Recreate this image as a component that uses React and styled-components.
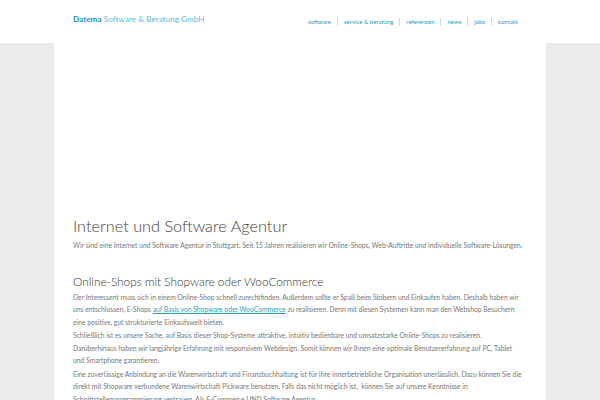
import React from "react";
import styled, { createGlobalStyle } from "styled-components";

const GlobalStyle = createGlobalStyle`
  html, body {
    margin: 0;
    padding: 0;
    background: #ebebeb;
    font-family: Lato, "Open Sans", sans-serif;
  }
`;

const Header = styled.header`
  height: 43px;
  background: #fff;
  display: flex;
  justify-content: space-between;
  align-items: flex-start;
  padding: 0 76px 0 73px;
`;

const Brand = styled.div`
  margin-top: 14px;
  font-size: 8px;
  color: #5bb8de;
  letter-spacing: 0.1px;

  b {
    color: #1b8ccc;
    font-weight: 700;
  }
`;

const Nav = styled.nav`
  display: flex;
  margin-top: 18px;
`;

const NavLink = styled.span`
  font-size: 6px;
  color: #2a9ec2;
  padding: 0 6px;
  line-height: 8px;
  border-left: 1px solid ${(p) => (p.$first ? "transparent" : "#b9e0ee")};

  &:first-child {
    padding-left: 0;
  }
`;

const Page = styled.main`
  width: 492px;
  margin: 0 auto;
  background: #fff;
  padding: 173px 23px 20px 19px;
  box-sizing: border-box;
  min-height: 357px;
`;

const Title = styled.h1`
  margin: 0 0 3px;
  font-size: 16.3px;
  font-weight: 300;
  color: #444;
  line-height: 20px;
`;

const SubTitle = styled.h2`
  margin: 22px 0 1px;
  font-size: 11.8px;
  font-weight: 300;
  color: #333;
  line-height: 16px;
`;

const Text = styled.p`
  margin: 0 0 ${(p) => p.$gap || 0}px;
  font-size: 6.75px;
  line-height: 12.5px;
  color: #777;
`;

const Link = styled.span`
  color: #2a9ec2;
  text-decoration: underline;
`;

const nav = ["software", "service & beratung", "referenzen", "news", "jobs", "kontakt"];

export default function App() {
  return (
    <>
      <GlobalStyle />
      <Header>
        <Brand>
          <b>Datema</b> Software &amp; Beratung GmbH
        </Brand>
        <Nav>
          {nav.map((n, i) => (
            <NavLink key={n} $first={i === 0}>
              {n}
            </NavLink>
          ))}
        </Nav>
      </Header>
      <Page>
        <Title>Internet und Software Agentur</Title>
        <Text>
          Wir sind eine Internet und Software Agentur in Stuttgart. Seit 15 Jahren realisieren wir
          Online-Shops, Web-Auftritte und individuelle Software-Lösungen.
        </Text>
        <SubTitle>Online-Shops mit Shopware oder WooCommerce</SubTitle>
        <Text $gap={1}>
          Der Interessent muss sich in einem Online-Shop schnell zurechtfinden. Außerdem sollte er
          Spaß beim Stöbern und Einkaufen haben. Deshalb haben wir uns entschlossen, E-Shops{" "}
          <Link>auf Basis von Shopware oder WooCommerce</Link> zu realisieren. Denn mit diesen
          Systemen kann man den Webshop Besuchern eine positive, gut strukturierte Einkaufswelt
          bieten.
        </Text>
        <Text $gap={1}>
          Schließlich ist es unsere Sache, auf Basis dieser Shop-Systeme attraktive, intuitiv
          bedienbare und umsatzstarke Online-Shops zu realisieren.
          <br />
          Darüberhinaus haben wir langjährige Erfahrung mit responsivem Webdesign. Somit können wir
          Ihnen eine optimale Benutzererfahrung auf PC, Tablet und Smartphone garantieren.
        </Text>
        <Text>
          Eine zuverlässige Anbindung an die Warenwirtschaft und Finanzbuchhaltung ist für Ihre
          innerbetriebliche Organisation unerlässlich. Dazu können Sie die direkt mit Shopware
          verbundene Warenwirtschaft Pickware benutzen. Falls das nicht möglich ist,&nbsp; können
          Sie auf unsere Kenntnisse in Schnittstellenprogrammierung vertrauen. Als E-Commerce UND
          Software Agentur.
        </Text>
      </Page>
    </>
  );
}
